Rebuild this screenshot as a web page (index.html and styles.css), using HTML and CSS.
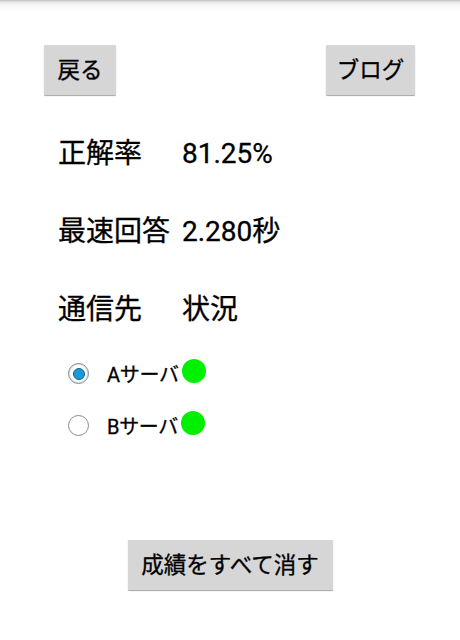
FILE: index.html
```html
<!DOCTYPE html>
<html lang="ja">
<head>
<meta charset="utf-8">
<link rel="stylesheet" href="styles.css">
</head>
<body>
<div class="topshade"></div>
<div class="toolbar">
  <button class="btn back">戻る</button>
  <button class="btn blog">ブログ</button>
</div>
<div class="stats">
  <div class="label">正解率</div><div class="value">81.25%</div>
  <div class="label">最速回答</div><div class="value">2.280秒</div>
  <div class="label">通信先</div><div class="value">状況</div>
</div>
<div class="servers">
  <label class="server"><span class="radio checked"></span><span class="name">Aサーバ</span><span class="status"></span></label>
  <label class="server"><span class="radio"></span><span class="name">Bサーバ</span><span class="status"></span></label>
</div>
<div class="footer">
  <button class="btn wide">成績をすべて消す</button>
</div>
</body>
</html>
```
FILE: styles.css
```css
html, body {
  margin: 0;
  padding: 0;
  background: #fff;
}
body {
  width: 460px;
  height: 640px;
  font-family: Roboto, "Noto Sans CJK JP", sans-serif;
  color: #000;
  -webkit-text-stroke: 0.3px #000;
}
.topshade {
  height: 12px;
  background: linear-gradient(#bcbcbc 0, #e6e6e6 2px, #f6f6f6 5px, #fff 12px);
}
.toolbar {
  display: flex;
  justify-content: space-between;
  margin-top: 33px;
  padding: 0 45px 0 44px;
}
.btn {
  height: 50px;
  background: #d6d6d6;
  border: none;
  border-radius: 1px;
  box-shadow: 0 1px 1px rgba(0,0,0,0.35);
  font-family: Roboto, "Noto Sans CJK JP", sans-serif;
  font-size: 22.5px;
  color: #000;
  -webkit-text-stroke: 0.3px #000;
  padding: 0;
  margin: 0;
  line-height: 50px;
  text-align: center;
}
.btn.back {
  width: 72px;
}
.btn.blog {
  width: 89px;
}
.stats {
  display: grid;
  grid-template-columns: 124px auto;
  grid-auto-rows: 78px;
  align-items: center;
  margin-top: 20px;
  padding-left: 58px;
  font-size: 28px;
  line-height: 32px;
}
.servers {
  display: flex;
  flex-direction: column;
  padding-left: 68px;
  margin-top: -1px;
}
.server {
  display: flex;
  align-items: center;
  height: 51.5px;
  font-size: 20px;
}
.radio {
  width: 21px;
  height: 21px;
  box-sizing: border-box;
  border: 1px solid #8a8a8a;
  border-radius: 50%;
  background: #fff;
  display: flex;
  align-items: center;
  justify-content: center;
  margin-right: 18px;
  -webkit-text-stroke: 0;
}
.radio.checked {
  border-color: #7a8a94;
  box-shadow: inset 0 0 0 1px #d6e4ec;
}
.radio.checked::after {
  content: "";
  width: 12px;
  height: 12px;
  box-sizing: border-box;
  border-radius: 50%;
  background: #1a9ad6;
  border: 1px solid #1a5f86;
}
.name {
  letter-spacing: -0.3px;
}
.status {
  width: 24px;
  height: 24px;
  border-radius: 50%;
  background: #00f000;
  margin-left: 3px;
  margin-top: -5px;
}
.footer {
  display: flex;
  justify-content: center;
  margin-top: 89px;
}
.btn.wide {
  width: 205px;
}
```
